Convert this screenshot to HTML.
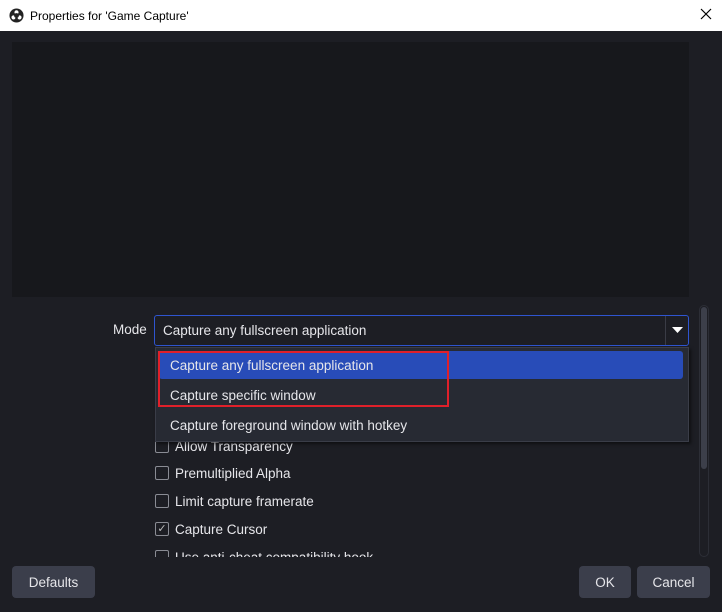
<!DOCTYPE html><html><head><style>
*{margin:0;padding:0;box-sizing:border-box}
body{width:722px;height:612px;background:#1d1e24;font-family:"Liberation Sans",sans-serif;color:#e6e6ea;position:relative;overflow:hidden;font-size:13px}
.t{position:absolute;left:0;top:0;width:722px;height:31px;background:#fff;color:#000;font-size:12px}
.a{position:absolute}
.cb{position:absolute;left:155px;width:14px;height:14px;border:1px solid #8a8c94;border-radius:2px}
.lb{position:absolute;left:175px;font-size:13.5px}
.btn{position:absolute;top:566px;height:32px;background:#3b3e4b;border-radius:4px;text-align:center;line-height:33px;font-size:13.5px}
</style></head><body>
<div class="t">
<svg class="a" style="left:9px;top:8px" width="15" height="15" viewBox="0 0 16 16"><circle cx="8" cy="8" r="7.5" fill="#222"/><circle cx="8" cy="4.6" r="2.2" fill="#fff"/><circle cx="4.8" cy="10" r="2.2" fill="#fff"/><circle cx="11.2" cy="10" r="2.2" fill="#fff"/><circle cx="8" cy="8" r="2.6" fill="#222"/></svg>
<div class="a" style="left:30px;top:9px">Properties for 'Game Capture'</div>
<svg class="a" style="left:700px;top:8px" width="12" height="12"><path d="M1 1L11 11M11 1L1 11" stroke="#000" stroke-width="1.2"/></svg>
</div>
<div class="a" style="left:12px;top:42px;width:677px;height:255px;background:#17181c"></div>
<div class="a" style="left:113px;top:322px;font-size:13.5px">Mode</div>
<div class="a" style="left:154px;top:315px;width:535px;height:31px;border:1px solid #2f55d0;border-radius:3px;background:#1d1e24"></div>
<div class="a" style="left:163px;top:323px;font-size:13.5px">Capture any fullscreen application</div>
<div class="a" style="left:665px;top:316px;width:1px;height:29px;background:#3a3c46"></div>
<svg class="a" style="left:672px;top:327px" width="11" height="7"><path d="M0 0H11L5.5 6Z" fill="#fff"/></svg>
<div class="a" style="left:699px;top:305px;width:10px;height:252px;border:1px solid #2c2e36;border-radius:5px"></div>
<div class="a" style="left:701px;top:307px;width:6px;height:162px;background:#3c3f4a;border-radius:3px"></div>
<div class="cb" style="top:439px"></div><div class="lb" style="top:439px">Allow Transparency</div>
<div class="cb" style="top:466px"></div><div class="lb" style="top:466px">Premultiplied Alpha</div>
<div class="cb" style="top:494px"></div><div class="lb" style="top:494px">Limit capture framerate</div>
<div class="cb" style="top:522px;color:#bbb;font-size:11px;line-height:12px;text-align:center">✓</div><div class="lb" style="top:522px">Capture Cursor</div>
<div class="a" style="left:150px;top:548px;width:400px;height:9px;overflow:hidden"><div class="cb" style="left:5px;top:2px"></div><div class="lb" style="left:25px;top:2px">Use anti-cheat compatibility hook</div></div>
<div class="a" style="left:155px;top:347px;width:534px;height:95px;background:#272a33;border:1px solid #3a3d48;box-shadow:2px 2px 3px rgba(0,0,0,.5)"></div>
<div class="a" style="left:159px;top:351px;width:524px;height:28px;background:#284cb8;border-radius:3px"></div>
<div class="a" style="left:170px;top:358px;font-size:13.5px">Capture any fullscreen application</div>
<div class="a" style="left:170px;top:388px;font-size:13.5px">Capture specific window</div>
<div class="a" style="left:170px;top:418px;font-size:13.5px">Capture foreground window with hotkey</div>
<div class="a" style="left:158px;top:351px;width:291px;height:56px;border:2px solid #e0202a"></div>
<div class="btn" style="left:12px;width:83px">Defaults</div>
<div class="btn" style="left:579px;width:52px">OK</div>
<div class="btn" style="left:637px;width:73px">Cancel</div>
</body></html>
